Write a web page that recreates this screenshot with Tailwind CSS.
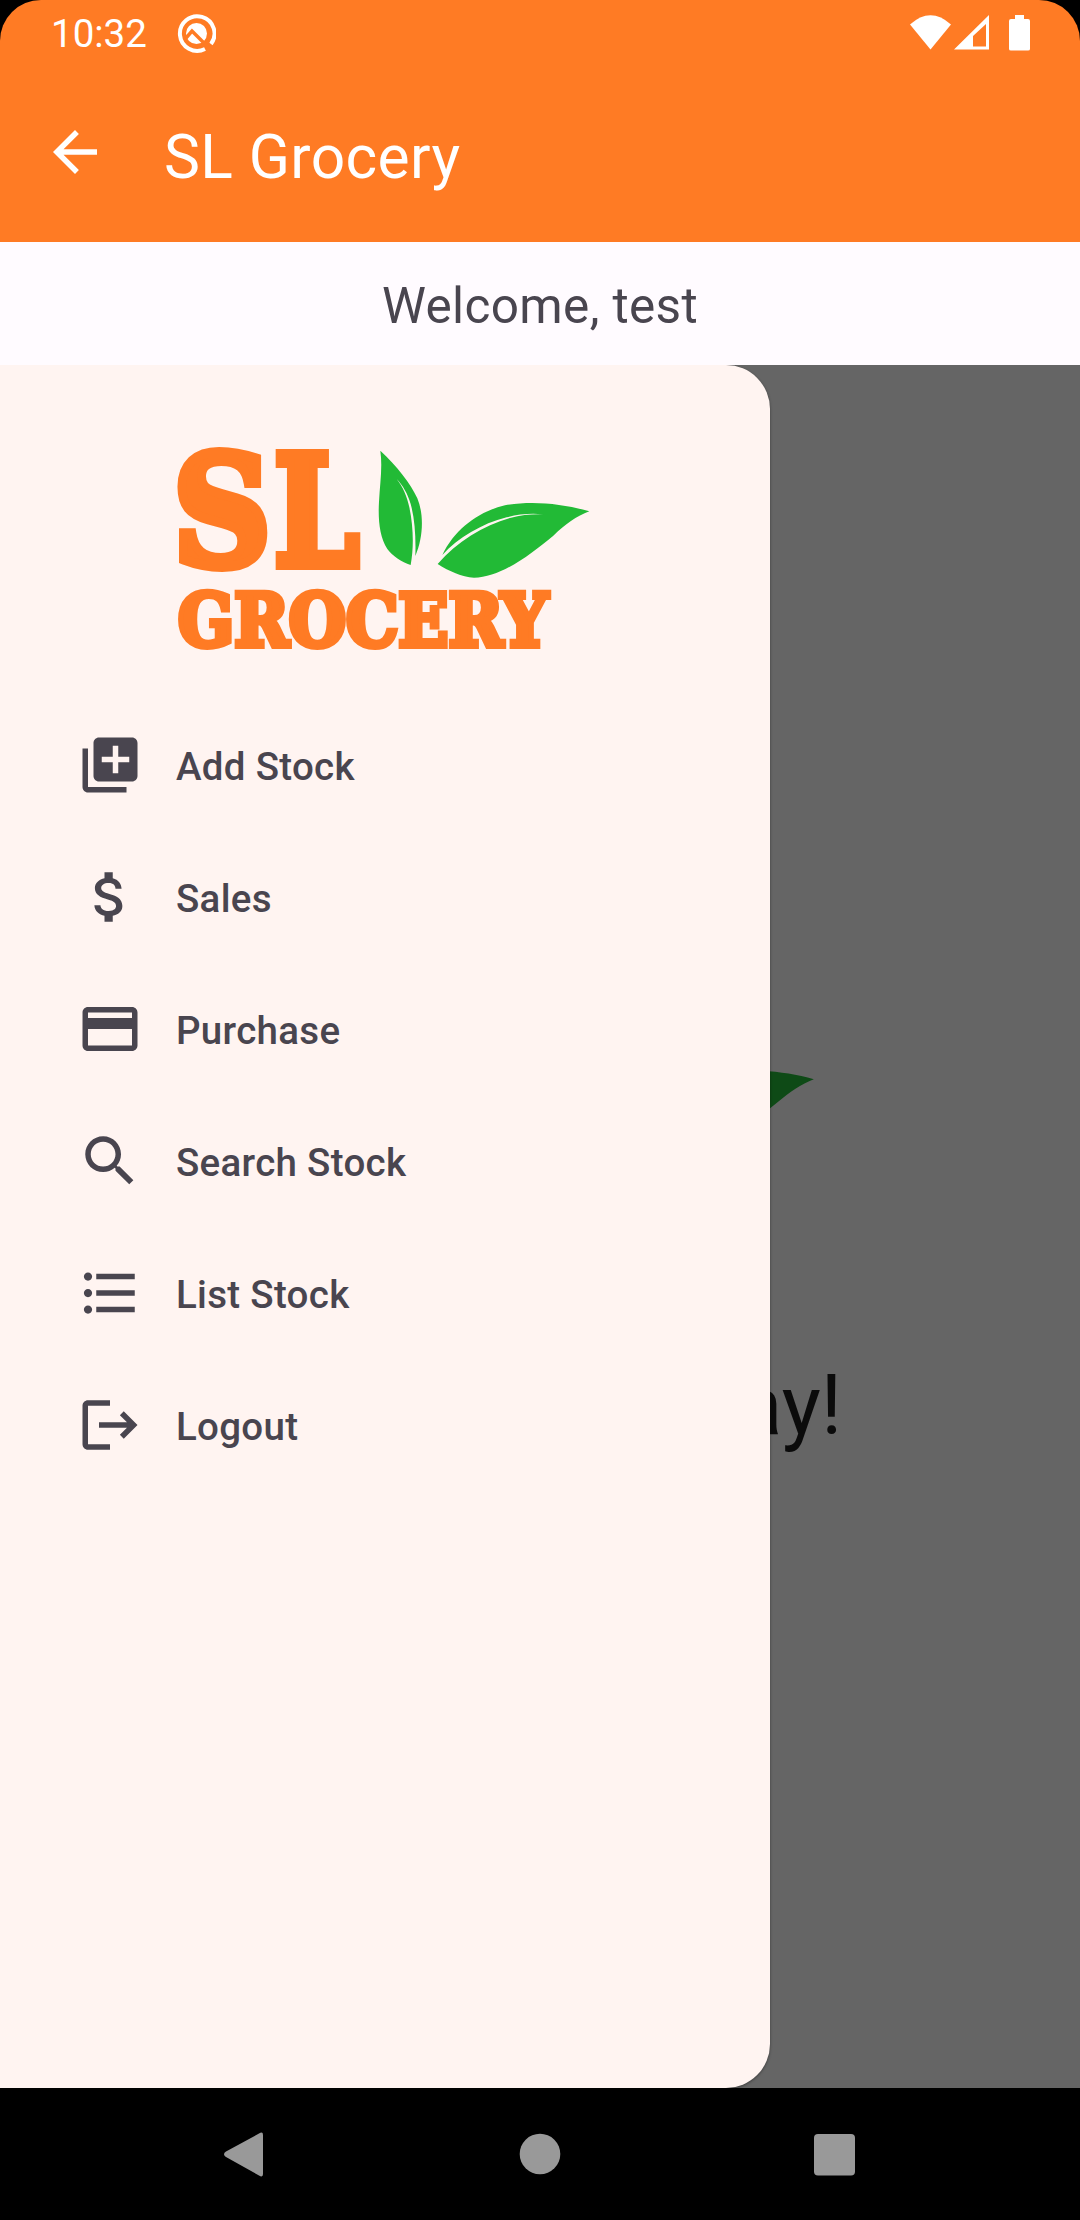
<!DOCTYPE html>
<html lang="en">
<head>
<meta charset="utf-8">
<title>SL Grocery</title>
<script src="https://cdn.jsdelivr.net/npm/@tailwindcss/browser@4"></script>
</head>
<body class="w-[1080px] h-[2220px] overflow-hidden bg-black font-['Roboto',sans-serif] text-[#49454f]">
<div class="w-full h-full flex flex-col">
  <div class="bg-[#ff7b24] h-[242px] rounded-t-[41px] flex flex-col text-white">
    <div class="h-[66px] flex items-center justify-between pl-[51px] pr-[49px]">
      <div class="flex items-center gap-[30px]">
        <span class="text-[38.500px] leading-[66px] pt-[2px]">10:32</span>
        <svg width="39" height="39" viewBox="0 0 39 39"><path d="M28 35A17.300 17.300 0 1 1 34 30" fill="none" stroke="#fff" stroke-width="4"/><circle cx="19.500" cy="19.500" r="10.500" fill="#fff"/><path d="M9 24l6-7L31 33" fill="none" stroke="#ff7b24" stroke-width="3.500"/></svg>
      </div>
      <svg width="121" height="36" viewBox="0 0 121 36" fill="#fff"><path d="M0 9.500Q20.500-9 41 9.500L20.500 34.500Z"/><path fill-rule="evenodd" d="M44 34.500L79 0V34.500ZM63 31.500H76V9L63 21Z"/><path d="M105 0h9v4h4q2 0 2 2v28q0 1.500-2 1.500h-17q-2 0-2-1.500V6q0-2 2-2h4z"/></svg>
    </div>
    <div class="h-[176px] flex items-start pl-[42px] pt-[53px]">
      <svg width="66" height="66" viewBox="0 0 24 24" fill="#fff"><path d="M20 11H7.830l5.590-5.590L12 4l-8 8 8 8 1.410-1.410L7.830 13H20v-2z"/></svg>
      <h1 class="ml-[56px] mt-[4px] text-[60.500px] leading-[70px] tracking-[.4px]">SL Grocery</h1>
    </div>
  </div>
  <div class="bg-[#fffbff] h-[123px] flex justify-center pt-[33px] text-[49.500px] leading-[62px] tracking-[.35px]">Welcome, test</div>
  <div class="relative h-[1723px] bg-[#656565] overflow-hidden">
    <svg class="absolute left-[384px] top-[633px]" width="450" height="240"><path transform="translate(200.500 0) scale(.33333)" fill="#0e4a16" d="M247 375C285 295 360 243 435 226C520 211 610 222 688 244C650 258 615 284 580 312C510 370 420 443 342 443C305 441 268 424 233 402C290 335 370 287 450 264C485 255 515 252 550 253C510 249 475 253 440 262C365 281 295 323 247 375Z"/></svg>
    <div class="absolute right-[238px] top-[993px] text-[82.500px] leading-[96px] text-[#0b0b0b] whitespace-nowrap">day!</div>
    <div class="relative w-[770px] h-full bg-[#fff4f1] rounded-r-[44px] shadow-[0_1px_3px_rgba(0,0,0,.4)] pt-[65px]">
      <svg class="ml-[160px]" width="450" height="240">
        <g fill="#ff7b24" stroke="#ff7b24" font-family="'DejaVu Serif',serif" font-weight="bold">
          <text x="13" y="135" font-size="152" stroke-width="10" textLength="98" lengthAdjust="spacingAndGlyphs">S</text>
          <text x="114" y="135" font-size="152" stroke-width="10" textLength="85" lengthAdjust="spacingAndGlyphs">L</text>
          <text x="18" y="215.500" font-size="73" stroke-width="6" textLength="370" lengthAdjust="spacingAndGlyphs">GROCERY</text>
        </g>
        <g transform="translate(200 0) scale(.33333)" fill="#22ba36">
          <path d="M61 62C110 108 152 160 172 205C193 255 189 325 166 378C168 320 164 265 152 222C143 192 129 166 110 147C128 170 141 198 148 232C160 290 162 350 152 405C125 396 97 378 82 357C58 320 54 265 57 215C60 160 68 110 61 62Z"/>
          <path d="M247 375C285 295 360 243 435 226C520 211 610 222 688 244C650 258 615 284 580 317C510 375 420 443 342 443C305 441 268 424 233 402C290 335 370 287 450 264C485 255 515 252 550 253C510 249 475 253 440 262C365 281 295 323 247 375Z"/>
        </g>
      </svg>
      <nav class="mt-[29px] pl-[77px] text-[38.500px] font-medium tracking-[.3px]">
        <div class="h-[132px] flex items-center gap-[33px]"><svg width="66" height="66" viewBox="0 0 24 24" fill="#49454f"><path d="M4 6H2v14c0 1.100.9 2 2 2h14v-2H4V6zm16-4H8c-1.100 0-2 .9-2 2v12c0 1.100.9 2 2 2h12c1.100 0 2-.9 2-2V4c0-1.100-.9-2-2-2zm-1 9h-4v4h-2v-4H9V9h4V5h2v4h4v2z"/></svg><span class="pt-[4px]">Add Stock</span></div>
        <div class="h-[132px] flex items-center gap-[33px]"><svg width="66" height="66" viewBox="0 0 24 24" fill="#49454f"><path d="M11.800 10.900c-2.270-.59-3-1.200-3-2.150 0-1.090 1.010-1.850 2.700-1.850 1.780 0 2.440.85 2.500 2.100h2.210c-.07-1.720-1.120-3.300-3.210-3.810V3h-3v2.160c-1.940.42-3.500 1.680-3.500 3.610 0 2.310 1.910 3.460 4.700 4.130 2.500.6 3 1.480 3 2.410 0 .69-.49 1.790-2.700 1.790-2.060 0-2.870-.92-2.980-2.100h-2.200c.12 2.190 1.760 3.420 3.680 3.830V21h3v-2.150c1.950-.37 3.500-1.500 3.500-3.550 0-2.840-2.430-3.810-4.700-4.400z"/></svg><span class="pt-[4px]">Sales</span></div>
        <div class="h-[132px] flex items-center gap-[33px]"><svg width="66" height="66" viewBox="0 0 24 24" fill="#49454f"><path d="M20 4H4c-1.110 0-1.990.89-1.990 2L2 18c0 1.110.89 2 2 2h16c1.110 0 2-.89 2-2V6c0-1.110-.89-2-2-2zm0 14H4v-6h16v6zm0-10H4V6h16v2z"/></svg><span class="pt-[4px]">Purchase</span></div>
        <div class="h-[132px] flex items-center gap-[33px]"><svg width="66" height="66" viewBox="0 0 24 24" fill="#49454f"><path d="M15.500 14h-.79l-.28-.27C15.410 12.590 16 11.110 16 9.500 16 5.910 13.090 3 9.500 3S3 5.910 3 9.500 5.910 16 9.500 16c1.610 0 3.090-.59 4.230-1.570l.27.28v.79l5 4.990L20.490 19l-4.990-5zm-6 0C7.010 14 5 11.990 5 9.500S7.010 5 9.500 5 14 7.010 14 9.500 11.990 14 9.500 14z"/></svg><span class="pt-[4px]">Search Stock</span></div>
        <div class="h-[132px] flex items-center gap-[33px]"><svg width="66" height="66" viewBox="0 0 24 24" fill="#49454f"><path d="M4 10.500c-.83 0-1.500.67-1.500 1.500s.67 1.500 1.500 1.500 1.500-.67 1.500-1.500-.67-1.500-1.500-1.500zm0-6c-.83 0-1.500.67-1.500 1.500S3.170 7.500 4 7.500 5.500 6.830 5.500 6 4.830 4.500 4 4.500zm0 12c-.83 0-1.500.68-1.500 1.500s.68 1.500 1.500 1.500 1.500-.68 1.500-1.500-.67-1.500-1.500-1.500zM7 19h14v-2H7v2zm0-6h14v-2H7v2zm0-8v2h14V5H7z"/></svg><span class="pt-[4px]">List Stock</span></div>
        <div class="h-[132px] flex items-center gap-[33px]"><svg width="66" height="66" viewBox="0 0 24 24" fill="#49454f"><path d="M12 3H4c-1.100 0-2 .9-2 2v14c0 1.100.9 2 2 2h8v-2H4V5h8z"/><path d="M8 11h10.170l-2.580-2.590L17 7l5 5-5 5-1.410-1.410L18.170 13H8z"/></svg><span class="pt-[4px]">Logout</span></div>
      </nav>
    </div>
  </div>
  <div class="h-[132px] bg-black flex items-start pt-[43px] pl-[223px]">
    <svg width="634" height="46" viewBox="0 0 634 46" fill="#999"><path d="M36 2.500Q40 0 40 4V43Q40 47 36 44.500L3 26Q-1 23 3 20.500Z"/><circle cx="317" cy="23" r="20.300"/><rect x="591" y="3" width="41" height="41.500" rx="4"/></svg>
  </div>
</div>
</body>
</html>
